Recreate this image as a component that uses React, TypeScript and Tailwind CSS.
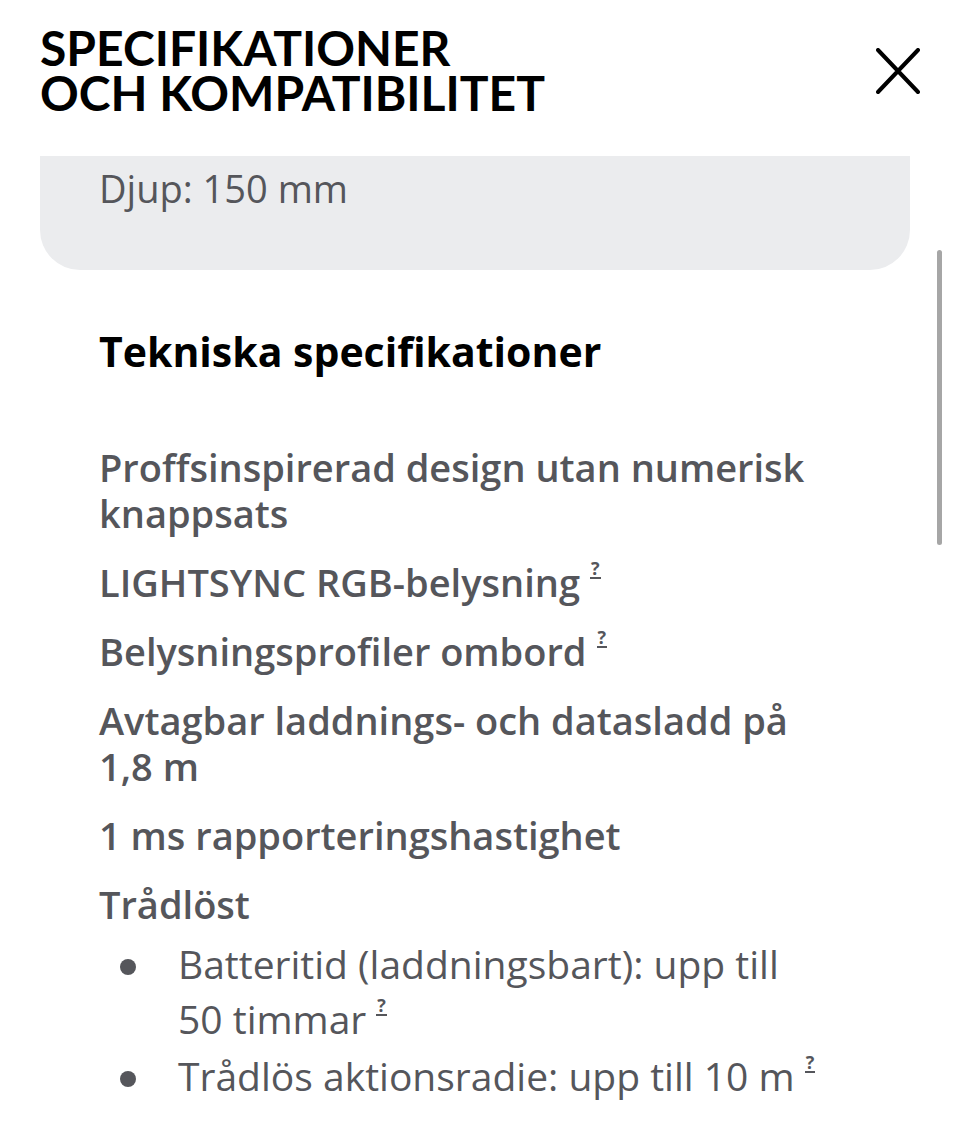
function Help() {
  return (
    <sup className="ml-[10px] inline-block border-b-2 border-[#55565b] px-[1px] text-[18px] font-bold leading-[18px] align-[13px]">
      ?
    </sup>
  );
}

function Dot() {
  return (
    <span className="w-[79px] shrink-0 pl-[21px] pt-[23px]">
      <span className="block h-4 w-4 rounded-full bg-[#55565b]" />
    </span>
  );
}

const specs: { text: React.ReactNode }[] = [
  { text: "Proffsinspirerad design utan numerisk knappsats" },
  { text: <>LIGHTSYNC RGB-belysning<Help /></> },
  { text: <>Belysningsprofiler ombord<Help /></> },
  { text: "Avtagbar laddnings- och datasladd på 1,8 m" },
  { text: "1 ms rapporteringshastighet" },
];

export default function App() {
  return (
    <div className="relative h-[1132px] w-[960px] overflow-hidden bg-white font-['Open_Sans',sans-serif] text-[#55565b]">
      <header className="flex items-start justify-between pl-[40px] pr-[40px] pt-[25px]">
        <h1 className="font-['Lato',sans-serif] text-[48px] font-bold uppercase leading-[45px] text-black">
          <span className="block">Specifikationer</span>
          <span className="block">och kompatibilitet</span>
        </h1>
        <svg className="mt-[23px]" width="44" height="46" viewBox="0 0 44 46" fill="none" stroke="black" strokeWidth="4" strokeLinecap="round">
          <path d="M2 2 L42 44 M42 2 L2 44" />
        </svg>
      </header>

      <div className="mx-[40px] mt-[41px] h-[114px] w-[870px] rounded-b-[40px] bg-[#ebecee] pl-[59px] pt-[9px]">
        <p className="text-[38px] leading-[46px]">Djup: 150 mm</p>
      </div>

      <div className="absolute right-[18px] top-[250px] h-[295px] w-[5px] rounded-full bg-[#a6a6a6]" />

      <section className="w-[840px] pl-[99px] pt-[58px]">
        <h2 className="text-[41px] font-bold leading-[46px] text-black">Tekniska specifikationer</h2>

        <ul className="mt-[70px] flex flex-col gap-[23px]">
          {specs.map((s, i) => (
            <li key={i} className="text-[38px] font-semibold leading-[46px]">
              {s.text}
            </li>
          ))}
          <li className="text-[38px] font-semibold leading-[46px]">
            Trådlöst
            <ul className="mt-[9px] flex w-[725px] flex-col gap-[2px] text-[39px] font-normal">
              <li className="flex items-start leading-[55px]">
                <Dot />
                <span>
                  Batteritid (laddningsbart): upp till 50 timmar
                  <Help />
                </span>
              </li>
              <li className="flex items-start leading-[55px]">
                <Dot />
                <span>
                  Trådlös aktionsradie: upp till 10&nbsp;m<Help />
                </span>
              </li>
            </ul>
          </li>
        </ul>
      </section>
    </div>
  );
}
